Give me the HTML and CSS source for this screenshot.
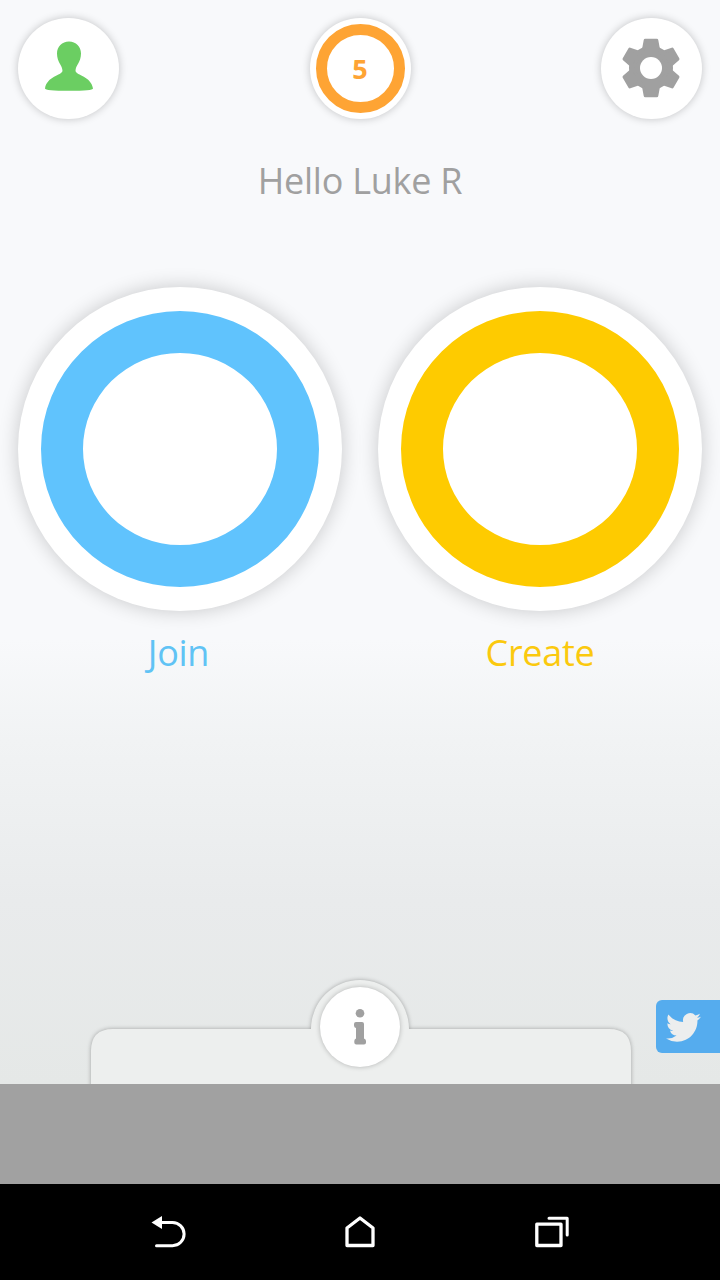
FILE: index.html
```html
<!DOCTYPE html>
<html lang="en">
<head>
    <title>Home</title>
    <meta charset="utf-8">
    <link rel="stylesheet" href="styles.css">
</head>
<body>
<div class="screen">
    <div class="top-bar">
        <div class="circle">
            <svg width="101" height="101" viewBox="0 0 101 101">
                <path fill="#6bce62" d="M51 23.500C58 23.500 63 28.500 63 35.500C63 44.500 57.500 47 57.500 53C58.500 57.500 73 58 75 70.500Q75 72.800 51 72.800Q27 72.800 27 70.500C29 58 43.500 57.500 44.500 53C44.500 47 39 44.500 39 35.500C39 28.500 44 23.500 51 23.500Z"/>
            </svg>
        </div>
        <div class="circle">
            <div class="score">5</div>
        </div>
        <div class="circle">
            <svg width="101" height="101" viewBox="-50 -50 101 101">
                <g fill="#a0a0a0" stroke="#a0a0a0" stroke-width="3" stroke-linejoin="round">
                    <circle r="20" stroke-width="4"/>
                    <path id="tooth" d="M-5.800-27.800H5.800L7.500-18.500L11-16H-11L-7.500-18.500Z"/>
                    <use href="#tooth" transform="rotate(60)"/>
                    <use href="#tooth" transform="rotate(120)"/>
                    <use href="#tooth" transform="rotate(180)"/>
                    <use href="#tooth" transform="rotate(240)"/>
                    <use href="#tooth" transform="rotate(300)"/>
                </g>
                <circle r="11" fill="#fff"/>
            </svg>
        </div>
    </div>

    <h1 class="hello">Hello Luke R</h1>

    <div class="actions">
        <div class="action join">
            <div class="disc"><div class="ring"></div></div>
            <div class="label">Join</div>
        </div>
        <div class="action create">
            <div class="disc"><div class="ring"></div></div>
            <div class="label">Create</div>
        </div>
    </div>

    <div class="drawer">
        <svg class="tab" width="560" height="120" viewBox="0 0 560 120">
            <path fill="#edefee" d="M11 120V72Q11 50 33 50H231A49 49 0 0 1 329 50H529Q551 50 551 72V120Z"/>
        </svg>
        <div class="info">
            <svg width="80" height="80" viewBox="0 0 80 80" fill="#a0a0a0">
                <circle cx="40" cy="26.300" r="4.300"/>
                <path d="M36 35H42Q44 35 44 37V51.500Q46 52 46 54V55.500Q46 57.500 44 57.500H36.300Q34.300 57.500 34.300 55.500V54Q34.300 52 36 51.500V41Q34 40.500 34 38.500V37Q34 35 36 35Z"/>
            </svg>
        </div>
    </div>

    <div class="twitter">
        <svg width="35" height="35" viewBox="0 0 24 24">
            <path fill="#eceeee" d="M23.954 4.569a10 10 0 0 1-2.825.775 4.958 4.958 0 0 0 2.163-2.723c-.951.555-2.005.959-3.127 1.184a4.920 4.920 0 0 0-8.384 4.482C7.691 8.094 4.066 6.130 1.640 3.161a4.822 4.822 0 0 0-.666 2.475c0 1.710.870 3.213 2.188 4.096a4.904 4.904 0 0 1-2.228-.616v.061a4.923 4.923 0 0 0 3.946 4.827 4.996 4.996 0 0 1-2.212.085 4.937 4.937 0 0 0 4.604 3.417 9.868 9.868 0 0 1-6.102 2.105c-.390 0-.779-.023-1.170-.067a13.995 13.995 0 0 0 7.557 2.209c9.054 0 13.999-7.496 13.999-13.986 0-.209 0-.420-.015-.630a9.936 9.936 0 0 0 2.460-2.548z"/>
        </svg>
    </div>
</div>

<div class="ad"></div>

<div class="nav">
    <svg width="40" height="40" viewBox="0 0 40 40" fill="none" stroke="#fff" stroke-width="3">
        <path d="M13 10.500H24.500A11.600 11.600 0 0 1 24.500 33.700H8.500" stroke-linecap="round"/>
        <path d="M3.500 10.500L14 4V17Z" fill="#fff" stroke="none"/>
    </svg>
    <svg width="40" height="40" viewBox="0 0 40 40" fill="none" stroke="#fff" stroke-width="3.300" stroke-linejoin="round">
        <path d="M7 33.500V16L20 6L33 16V33.500Z"/>
    </svg>
    <svg width="40" height="40" viewBox="0 0 40 40" fill="none" stroke="#fff" stroke-width="3.300" stroke-linejoin="round">
        <path d="M4.800 12.200H29V33.500H4.800Z"/>
        <path d="M17 6.300H35.200V23" stroke-width="3" stroke-linecap="round"/>
    </svg>
</div>
</body>
</html>
```
FILE: styles.css
```css
body {
    margin: 0;
    width: 720px;
    height: 1280px;
    overflow: hidden;
    background: #000;
    font-family: "Open Sans", "Noto Sans", sans-serif;
}

.screen {
    position: relative;
    height: 1084px;
    overflow: hidden;
    box-sizing: border-box;
    padding: 18px 18px 0;
    background: linear-gradient(#f8f9fb 0, #f8f9fb 640px, #f1f3f4 740px, #e9ebec 900px, #e5e8e7 1084px);
}

.top-bar {
    display: flex;
    justify-content: space-between;
}

.circle {
    display: flex;
    align-items: center;
    justify-content: center;
    width: 101px;
    height: 101px;
    border-radius: 50%;
    background: #fff;
    box-shadow: 0 0 8px rgba(0, 0, 0, 0.22);
}

.score {
    width: 89px;
    height: 89px;
    box-sizing: border-box;
    border: 11px solid #fea434;
    border-radius: 50%;
    line-height: 67px;
    text-align: center;
    font-size: 27px;
    font-weight: bold;
    color: #fea434;
}

.hello {
    margin: 37px 0 0;
    line-height: 49px;
    text-align: center;
    font-size: 36px;
    font-weight: normal;
    letter-spacing: -0.25px;
    color: #a0a0a0;
}

.actions {
    display: flex;
    justify-content: space-between;
    margin-top: 82px;
}

.action {
    width: 324px;
    text-align: center;
}

.disc {
    display: flex;
    align-items: center;
    justify-content: center;
    height: 324px;
    border-radius: 50%;
    background: #fff;
    box-shadow: 0 0 20px rgba(0, 0, 0, 0.2);
}

.ring {
    width: 278px;
    height: 276px;
    box-sizing: border-box;
    border: 42px solid;
    border-radius: 50%;
}

.label {
    margin-top: 17px;
    line-height: 49px;
    font-size: 36px;
    letter-spacing: -0.3px;
}

.join .ring {
    border-color: #60c3fd;
}

.join .label {
    padding-right: 3px;
    color: #60c3f5;
}

.create .ring {
    border-color: #fecb00;
}

.create .label {
    color: #fbc90e;
}

/* pull-up panel over the bottom edge */
.drawer {
    position: absolute;
    left: 80px;
    bottom: -15px;
    width: 560px;
    height: 120px;
}

.tab {
    display: block;
    filter: drop-shadow(0 0 2px rgba(0, 0, 0, 0.3));
}

.info {
    position: absolute;
    left: 240px;
    top: 8px;
    width: 80px;
    height: 80px;
    border-radius: 50%;
    background: #fff;
    box-shadow: 0 0 5px rgba(0, 0, 0, 0.25);
}

.twitter {
    position: absolute;
    right: 0;
    top: 1000px;
    display: flex;
    align-items: center;
    box-sizing: border-box;
    width: 64px;
    height: 53px;
    padding: 2px 0 0 10px;
    border-radius: 6px 0 0 6px;
    background: #55acee;
}

.ad {
    height: 100px;
    background: #a1a1a1;
}

.nav {
    display: flex;
    align-items: center;
    justify-content: center;
    gap: 152px;
    height: 96px;
}
```
